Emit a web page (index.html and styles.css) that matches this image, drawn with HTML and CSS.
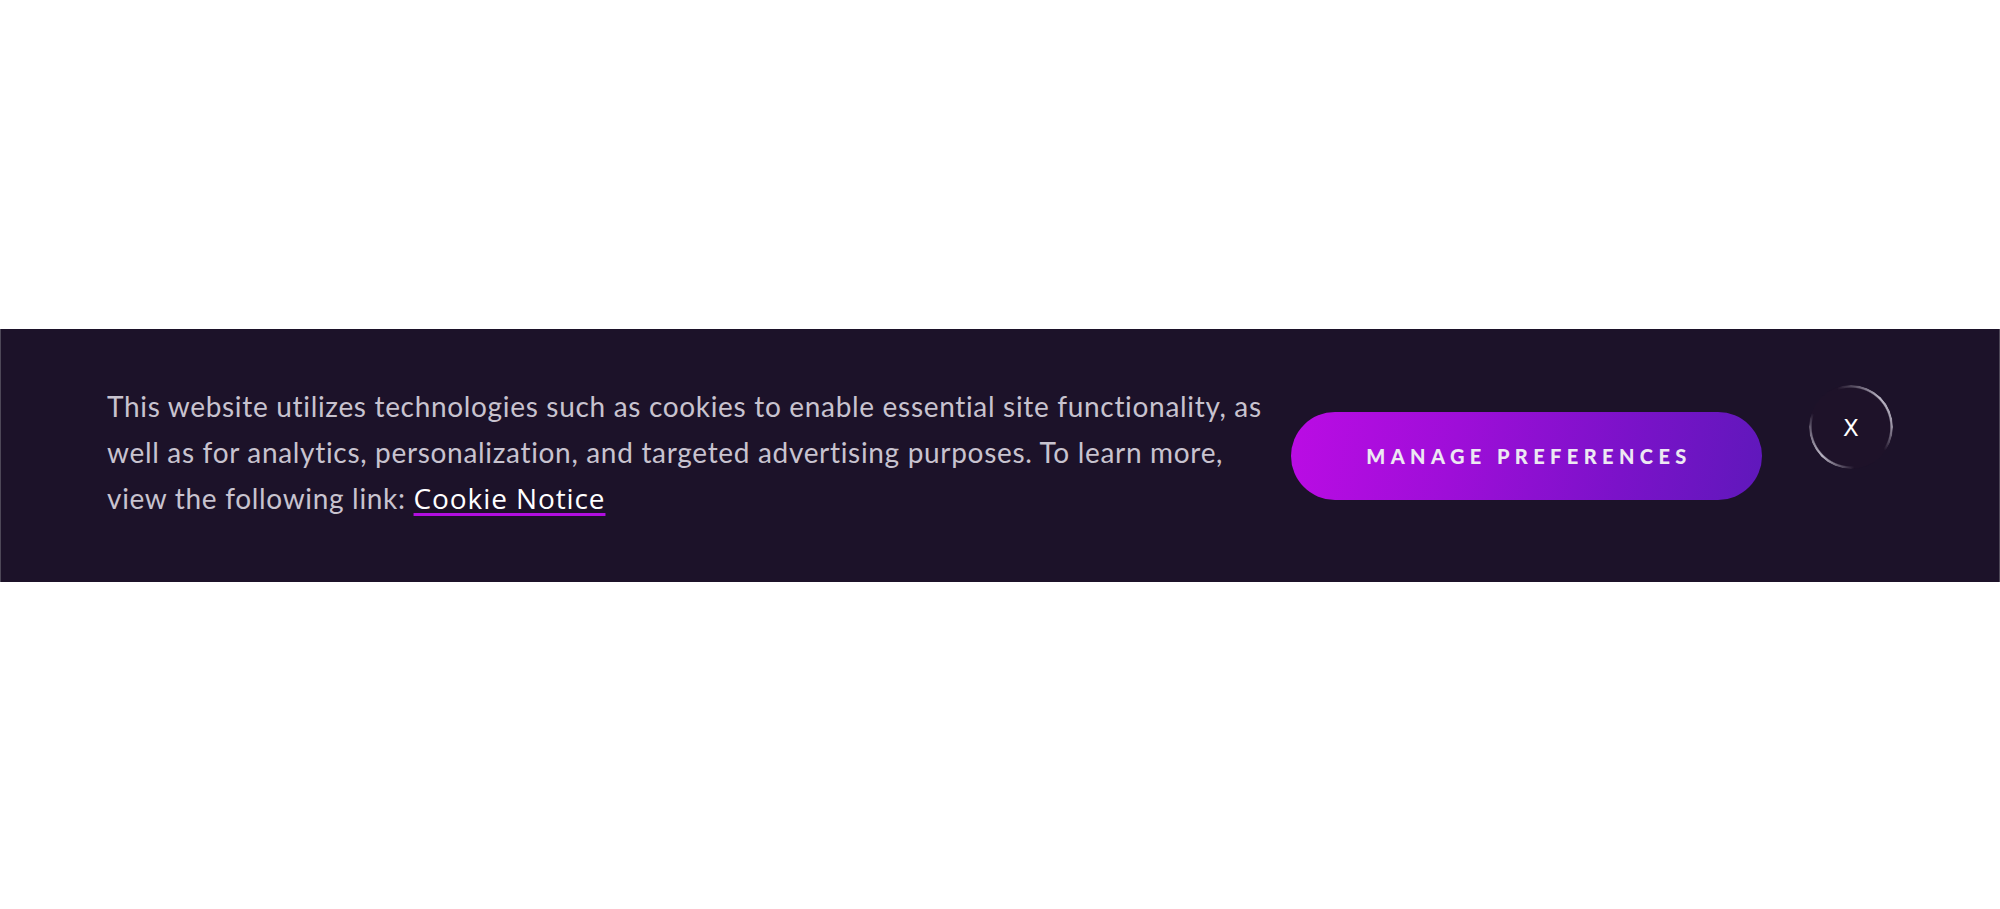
FILE: index.html
```html
<!DOCTYPE html>
<html lang="en">
<head>
<meta charset="utf-8">
<title>Cookie banner</title>
<link rel="stylesheet" href="styles.css">
</head>
<body>
<div class="page">
  <section class="banner" aria-label="Cookie banner">
    <p class="message">This website utilizes technologies such as cookies to enable essential site functionality, as well as for analytics, personalization, and targeted advertising purposes. To learn more, view the following link: <a class="notice-link" href="#">Cookie Notice</a></p>
    <button class="manage-btn" type="button">MANAGE PREFERENCES</button>
    <button class="close-btn" type="button" aria-label="Close"><span class="close-ring"></span><span class="close-x">X</span></button>
  </section>
</div>
</body>
</html>
```
FILE: styles.css
```css
html, body {
  margin: 0;
  padding: 0;
  background: #ffffff;
}
.page {
  width: 2000px;
  height: 909px;
  padding-top: 329px;
  box-sizing: border-box;
}
.banner {
  height: 253px;
  box-sizing: border-box;
  background: #1c1229;
  border-left: 1px solid #4d4757;
  border-right: 1px solid #4d4757;
  display: flex;
  align-items: center;
  padding: 0 106px;
}
.message {
  flex: 0 0 1170px;
  margin: 0 14px 8px 0;
  font-family: "Lato", "Liberation Sans", sans-serif;
  font-size: 28px;
  line-height: 46px;
  color: #c8c3cf;
  letter-spacing: 0.68px;
}
.notice-link {
  font-family: "Open Sans", "Liberation Sans", sans-serif;
  letter-spacing: 0.9px;
  color: #ffffff;
  text-decoration: underline;
  text-decoration-color: #b10ee0;
  text-decoration-thickness: 3px;
  text-underline-offset: 4px;
}
.manage-btn {
  flex: 0 0 471px;
  height: 88px;
  border: 0;
  border-radius: 44px;
  background: linear-gradient(100deg, #bb0ce4 0%, #9e0ed8 35%, #7b12c9 70%, #5f18bb 100%);
  color: #ede8f2;
  font-family: "Lato", "Liberation Sans", sans-serif;
  font-weight: 900;
  font-size: 20px;
  letter-spacing: 5.4px;
  padding: 0 0 0 5px;
  margin: 0 47px 0 0;
  cursor: pointer;
}
.close-btn {
  flex: 0 0 84px;
  width: 84px;
  height: 84px;
  align-self: flex-start;
  margin-top: 56px;
  padding: 0;
  border: 0;
  border-radius: 50%;
  background: #1e1229;
  position: relative;
  display: flex;
  align-items: center;
  justify-content: center;
  cursor: pointer;
}
.close-ring {
  position: absolute;
  inset: 0;
  border-radius: 50%;
  background: conic-gradient(from -20deg,
    rgba(185,180,195,0) 0deg,
    rgba(185,180,195,1) 65deg,
    rgba(185,180,195,0.8) 110deg,
    rgba(185,180,195,0) 145deg,
    rgba(185,180,195,0) 195deg,
    rgba(185,180,195,1) 245deg,
    rgba(185,180,195,0.45) 290deg,
    rgba(185,180,195,0) 310deg,
    rgba(185,180,195,0) 360deg);
  -webkit-mask: radial-gradient(circle, transparent 38.8px, #000 40px);
  mask: radial-gradient(circle, transparent 38.8px, #000 40px);
}
.close-x {
  position: relative;
  font-family: "DejaVu Sans", "Liberation Sans", sans-serif;
  font-size: 23px;
  line-height: 1;
  color: #ffffff;
  margin-top: 2px;
}
```
